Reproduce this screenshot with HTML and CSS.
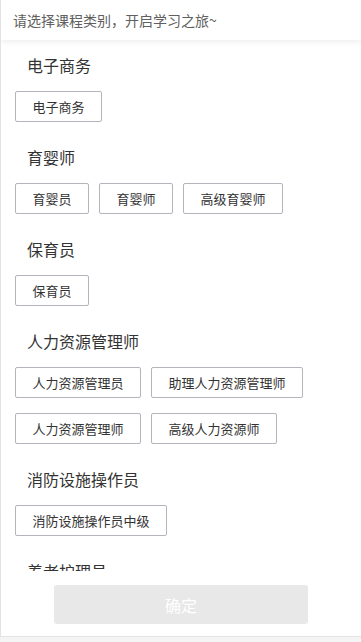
FILE: index.html
```html
<!DOCTYPE html>
<html lang="zh-CN">
<head>
<meta charset="utf-8">
<title>选择课程类别</title>
<link rel="stylesheet" href="styles.css">
</head>
<body>
<div class="page">
  <header class="topbar">请选择课程类别，开启学习之旅~</header>
  <main class="content">
    <section class="group">
      <h2 class="group-title">电子商务</h2>
      <div class="tags">
        <button class="tag">电子商务</button>
      </div>
    </section>
    <section class="group">
      <h2 class="group-title">育婴师</h2>
      <div class="tags">
        <button class="tag">育婴员</button>
        <button class="tag">育婴师</button>
        <button class="tag">高级育婴师</button>
      </div>
    </section>
    <section class="group">
      <h2 class="group-title">保育员</h2>
      <div class="tags">
        <button class="tag">保育员</button>
      </div>
    </section>
    <section class="group">
      <h2 class="group-title">人力资源管理师</h2>
      <div class="tags">
        <button class="tag">人力资源管理员</button>
        <button class="tag">助理人力资源管理师</button>
        <button class="tag">人力资源管理师</button>
        <button class="tag">高级人力资源师</button>
      </div>
    </section>
    <section class="group">
      <h2 class="group-title">消防设施操作员</h2>
      <div class="tags">
        <button class="tag">消防设施操作员中级</button>
      </div>
    </section>
    <section class="group">
      <h2 class="group-title">养老护理员</h2>
      <div class="tags">
        <button class="tag">养老护理员</button>
      </div>
    </section>
  </main>
  <footer class="footer">
    <button class="confirm">确定</button>
  </footer>
</div>
</body>
</html>
```

FILE: styles.css
```css
html, body {
  margin: 0;
  padding: 0;
  background: #f4f4f4;
}
body {
  font-family: "Noto Sans CJK SC", "Noto Sans", sans-serif;
  color: #333;
}
.page {
  width: 361px;
  height: 637px;
  box-sizing: border-box;
  background: #fff;
  border-left: 1px solid #e3e3e3;
  border-bottom: 1px solid #e3e3e3;
  display: flex;
  flex-direction: column;
  overflow: hidden;
}
.topbar {
  position: relative;
  z-index: 1;
  flex: 0 0 40px;
  height: 40px;
  line-height: 40px;
  padding-left: 12px;
  font-size: 14px;
  color: #606060;
  background: #fff;
  box-shadow: 0 2px 6px rgba(0, 0, 0, 0.07);
}
.content {
  flex: 1;
  overflow: hidden;
  padding: 14px 14px 0;
}
.group {
  margin-bottom: 24px;
}
.group-title {
  margin: 0 0 15px 12px;
  font-size: 16px;
  font-weight: normal;
  line-height: 22px;
  color: #333;
}
.tags {
  display: flex;
  flex-wrap: wrap;
  column-gap: 10px;
  row-gap: 15px;
}
.tag {
  height: 31px;
  padding: 0 16.5px;
  margin: 0;
  box-sizing: border-box;
  border: 1px solid #b4b4bc;
  border-radius: 2px;
  background: #fff;
  font-family: inherit;
  font-size: 13px;
  line-height: 29px;
  color: #333;
}
.footer {
  flex: 0 0 auto;
  background: #fff;
  padding: 14px 0 12px;
  display: flex;
  justify-content: center;
}
.confirm {
  width: 254px;
  height: 39px;
  margin: 0;
  border: none;
  border-radius: 3px;
  background: #e8e8e8;
  color: #fff;
  font-family: inherit;
  font-size: 16px;
}
```
